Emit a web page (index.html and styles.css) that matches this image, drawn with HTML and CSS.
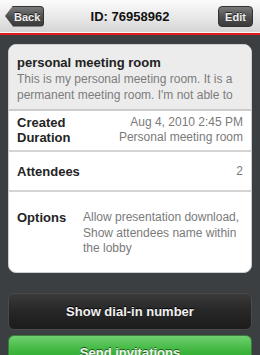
FILE: index.html
```html
<!DOCTYPE html>
<html>
<head>
<meta charset="utf-8">
<link rel="stylesheet" href="styles.css">
</head>
<body>
<div class="screen">
  <header class="navbar">
    <div class="nav-btn back">Back</div>
    <div class="nav-title">ID: 76958962</div>
    <div class="nav-btn edit">Edit</div>
  </header>
  <main class="content">
    <section class="card">
      <div class="desc">
        <div class="desc-title">personal meeting room</div>
        <div class="desc-text">This is my personal meeting room. It is a permanent meeting room. I'm not able to delete it.</div>
      </div>
      <div class="group">
        <div class="row"><span class="label">Created</span><span class="value">Aug 4, 2010 2:45 PM</span></div>
        <div class="row"><span class="label">Duration</span><span class="value">Personal meeting room</span></div>
      </div>
      <div class="group single">
        <div class="row"><span class="label">Attendees</span><span class="value">2</span></div>
      </div>
      <div class="group options">
        <span class="label">Options</span>
        <span class="opt-value">Allow presentation download, Show attendees name within the lobby</span>
      </div>
    </section>
    <div class="btn dark">Show dial-in number</div>
    <div class="btn green">Send invitations</div>
  </main>
</div>
</body>
</html>
```

FILE: styles.css
```css
html, body {
  margin: 0;
  padding: 0;
}
body {
  width: 260px;
  height: 355px;
  overflow: hidden;
  background: #3c3f42;
  font-family: "Liberation Sans", Arial, sans-serif;
}
.screen {
  display: flex;
  flex-direction: column;
  height: 355px;
}
.navbar {
  flex: none;
  height: 33px;
  box-sizing: border-box;
  display: flex;
  align-items: center;
  justify-content: space-between;
  padding: 0 7px 0 5px;
  background: linear-gradient(#fbfbfb, #e8e8e8 55%, #d4d4d4);
  border-bottom: 1px solid #f4f4f4;
  box-shadow: 0 2px 0 #e21b1b;
  margin-bottom: 2px;
  position: relative;
}
.nav-title {
  font-size: 13px;
  font-weight: bold;
  color: #111;
  position: absolute;
  left: 0;
  right: 0;
  text-align: center;
  line-height: 33px;
  pointer-events: none;
}
.nav-btn {
  height: 21px;
  line-height: 20px;
  color: #eee;
  font-size: 11px;
  font-weight: bold;
  text-shadow: 0 -1px 0 #222;
  background: linear-gradient(#7a7a7a, #505050 50%, #3a3a3a);
  border: 1px solid #333;
  border-radius: 4px;
  box-sizing: border-box;
}
.back {
  width: 39px;
  padding-left: 9px;
  clip-path: polygon(8px 0, 100% 0, 100% 100%, 8px 100%, 0 50%);
  border-left: none;
}
.edit {
  width: 35px;
  text-align: center;
}
.content {
  flex: 1;
  padding: 9px 8px 0 8px;
  display: flex;
  flex-direction: column;
}
.card {
  flex: none;
  background: #fff;
  border-radius: 8px;
  overflow: hidden;
  border: 1px solid #cfcfcf;
  height: 229px;
  box-sizing: border-box;
}
.desc {
  background: #ececec;
  padding: 10px 8px 6px 8px;
  height: 66px;
  box-sizing: border-box;
  border-bottom: 2px solid #cbcbcb;
}
.desc-title {
  font-size: 13px;
  font-weight: bold;
  color: #222;
  line-height: 16px;
}
.desc-text {
  font-size: 12px;
  color: #7c7c7c;
  line-height: 16px;
  height: 32px;
  overflow: hidden;
}
.group {
  border-bottom: 2px solid #d4d4d4;
  padding: 4px 8px 5px 8px;
}
.group.single {
  height: 40px;
  box-sizing: border-box;
  display: flex;
  align-items: center;
  padding: 0 8px;
}
.group.single .row {
  flex: 1;
}
.row {
  display: flex;
  justify-content: space-between;
  line-height: 15px;
}
.label {
  font-size: 13px;
  font-weight: bold;
  color: #242424;
}
.value {
  font-size: 12px;
  color: #7a7a7a;
}
.group.options {
  border-bottom: none;
  display: flex;
  padding: 18px 8px 0 8px;
  line-height: 15.5px;
}
.options .label {
  width: 66px;
  flex: none;
}
.opt-value {
  font-size: 12px;
  color: #7a7a7a;
  flex: 1;
}
.btn {
  flex: none;
  text-align: center;
  font-size: 13px;
  font-weight: bold;
  color: #f2f2f2;
  border-radius: 6px;
  box-sizing: border-box;
}
.btn.dark {
  margin-top: 20px;
  height: 37px;
  line-height: 35px;
  background: linear-gradient(#3a3a3a, #262626 50%, #1c1c1c);
  border: 1px solid #4a4a4a;
  text-shadow: 0 -1px 0 #000;
}
.btn.green {
  margin-top: 5px;
  height: 36px;
  line-height: 34px;
  background: linear-gradient(#6fd06f, #3db53d 45%, #1c9e1c);
  border: 1px solid #3a7a3a;
  text-shadow: 0 -1px 0 #1a5a1a;
}
```
